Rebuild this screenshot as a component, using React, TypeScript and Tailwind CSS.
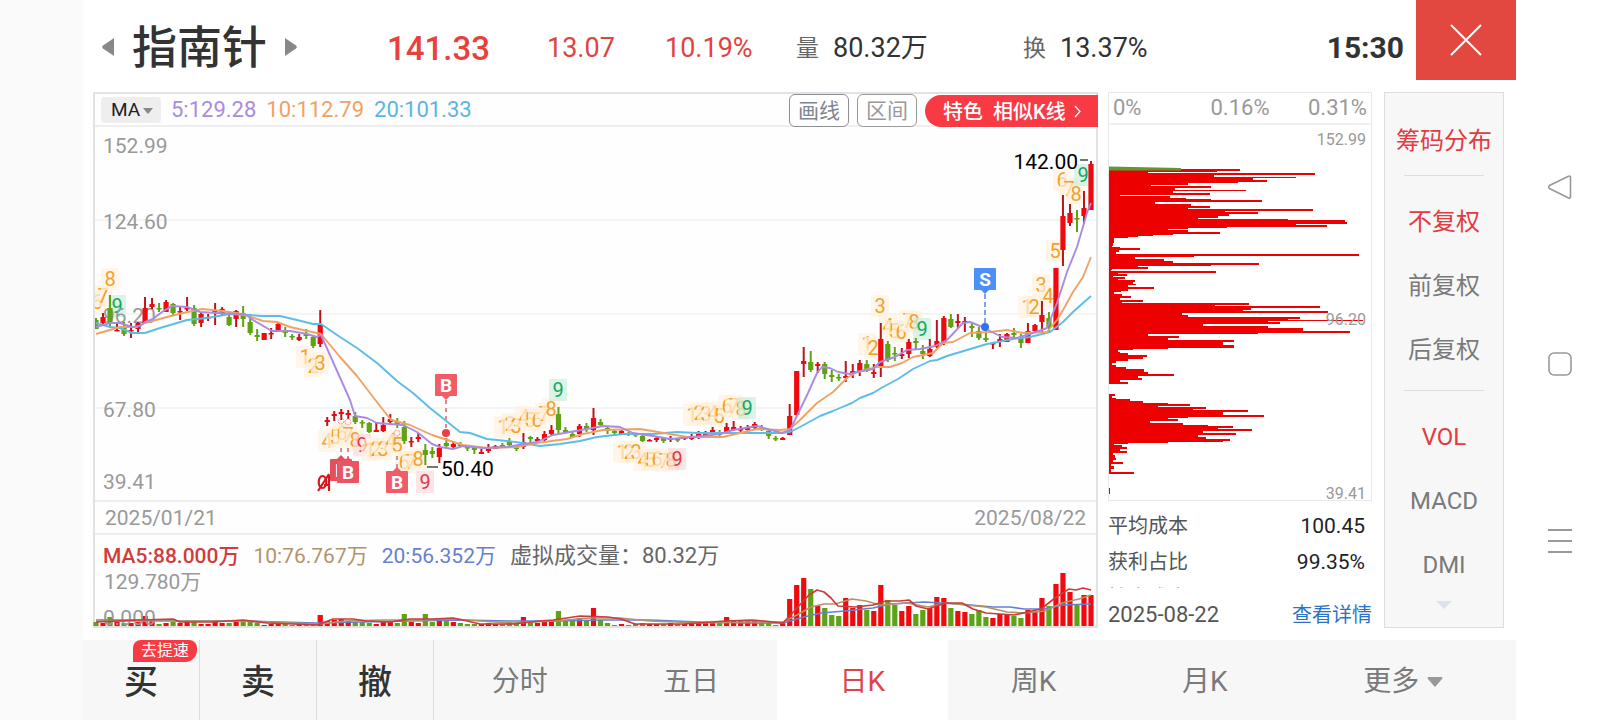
import React, { useState } from 'react';

type Candle = [high: number, top: number, bottom: number, low: number, up: 0 | 1, volume: number];
type TagKind = 'orange' | 'green' | 'red';
type Tag = [x: number, y: number, n: number, kind?: TagKind];

const FIRST_X = 96;
const STEP = 7.007;

const candles: Candle[] = [
  [318, 320, 329, 329, 0, 4], [313, 317, 323, 324, 1, 3], [295, 308, 323, 327, 0, 9], [323, 330, 331, 331, 1, 4],
  [322, 327, 334, 336, 0, 3], [323, 330, 331, 338, 1, 3], [322, 323, 329, 332, 1, 4], [297, 308, 323, 323, 1, 10],
  [298, 304, 307, 309, 1, 6], [303, 308, 309, 312, 0, 2], [300, 302, 312, 312, 1, 3], [303, 304, 313, 315, 0, 4],
  [307, 311, 312, 320, 1, 3], [297, 308, 309, 311, 1, 4], [305, 308, 324, 326, 0, 4], [312, 314, 323, 327, 1, 2],
  [314, 317, 318, 321, 1, 2], [303, 311, 313, 325, 1, 6], [307, 309, 313, 316, 1, 3], [315, 317, 325, 326, 0, 3],
  [310, 311, 319, 327, 1, 6], [306, 314, 319, 327, 0, 5], [314, 322, 333, 335, 0, 4], [329, 335, 337, 341, 0, 3],
  [333, 333, 340, 340, 1, 1], [328, 333, 334, 339, 1, 2], [323, 324, 330, 331, 1, 3], [327, 331, 333, 337, 0, 2],
  [334, 336, 337, 340, 0, 1], [334, 337, 340, 341, 1, 2], [329, 334, 336, 339, 0, 2], [336, 337, 346, 348, 0, 3],
  [310, 324, 344, 347, 1, 11], [417, 420, 422, 426, 1, 5], [411, 414, 416, 421, 1, 6], [409, 412, 414, 420, 1, 7],
  [410, 413, 415, 419, 1, 5], [412, 416, 422, 424, 0, 4], [420, 422, 423, 428, 0, 4], [422, 423, 432, 433, 0, 3],
  [423, 430, 432, 432, 1, 2], [417, 425, 431, 432, 1, 4], [414, 419, 422, 423, 1, 4], [418, 422, 424, 428, 0, 3],
  [421, 427, 441, 444, 0, 12], [437, 441, 442, 447, 1, 4], [433, 437, 439, 442, 1, 3], [444, 450, 455, 465, 0, 12],
  [447, 451, 454, 458, 0, 4], [444, 448, 457, 463, 1, 8], [438, 443, 446, 447, 0, 7], [441, 444, 447, 448, 1, 4],
  [442, 444, 446, 447, 0, 3], [445, 447, 448, 451, 0, 2], [447, 448, 450, 454, 0, 2], [449, 452, 454, 454, 1, 2],
  [444, 448, 451, 453, 1, 3], [445, 446, 449, 449, 1, 2], [443, 445, 447, 448, 0, 2], [438, 441, 445, 447, 0, 4],
  [446, 447, 449, 451, 0, 3], [433, 442, 447, 449, 1, 9], [436, 437, 439, 443, 0, 4], [437, 439, 441, 443, 1, 3],
  [431, 434, 440, 441, 1, 4], [425, 430, 434, 435, 1, 5], [407, 414, 430, 433, 0, 15], [427, 430, 432, 433, 0, 6],
  [432, 434, 437, 438, 0, 5], [424, 426, 434, 437, 1, 8], [423, 426, 429, 432, 0, 6], [408, 418, 430, 435, 1, 18],
  [419, 422, 425, 427, 0, 6], [427, 428, 431, 434, 0, 3], [430, 431, 433, 435, 0, 1], [429, 431, 434, 435, 1, 2],
  [432, 433, 435, 436, 0, 1], [433, 434, 435, 437, 0, 2], [434, 436, 441, 442, 0, 3], [439, 440, 441, 441, 1, 2],
  [437, 438, 440, 442, 1, 2], [437, 438, 441, 443, 0, 2], [436, 438, 440, 442, 1, 3], [438, 439, 440, 442, 0, 2],
  [436, 437, 439, 440, 1, 2], [434, 437, 439, 440, 1, 2], [431, 434, 437, 439, 1, 3], [431, 433, 435, 436, 1, 3],
  [427, 430, 433, 434, 1, 4], [430, 433, 435, 438, 0, 3], [423, 427, 432, 433, 1, 9], [421, 427, 430, 431, 1, 6],
  [426, 429, 430, 432, 1, 5], [425, 427, 430, 431, 1, 5], [422, 424, 428, 430, 1, 5], [425, 428, 430, 431, 0, 3],
  [429, 431, 436, 439, 0, 3], [436, 438, 439, 441, 0, 1], [437, 438, 440, 440, 1, 3], [404, 416, 435, 435, 1, 27],
  [371, 371, 415, 416, 1, 41], [347, 361, 364, 377, 1, 48], [351, 362, 370, 372, 0, 37], [362, 364, 366, 373, 1, 20],
  [362, 364, 374, 379, 0, 18], [370, 375, 377, 382, 0, 11], [374, 377, 378, 381, 0, 10], [361, 376, 378, 382, 1, 28],
  [364, 371, 374, 378, 1, 18], [360, 363, 371, 376, 1, 21], [360, 364, 371, 372, 0, 16], [364, 372, 374, 378, 1, 15],
  [323, 339, 368, 377, 1, 41], [341, 344, 360, 362, 0, 26], [347, 353, 354, 361, 0, 21], [348, 354, 356, 359, 1, 15],
  [339, 342, 354, 358, 1, 20], [338, 341, 343, 349, 0, 12], [345, 351, 354, 359, 0, 16], [339, 349, 356, 357, 1, 18],
  [320, 341, 347, 348, 1, 29], [316, 318, 342, 345, 1, 28], [314, 319, 327, 328, 0, 18], [314, 321, 323, 328, 1, 15],
  [317, 321, 323, 332, 1, 14], [322, 326, 328, 337, 0, 12], [327, 331, 338, 340, 0, 16], [330, 338, 340, 342, 0, 9],
  [342, 343, 344, 349, 1, 8], [334, 339, 341, 347, 1, 12], [333, 334, 342, 342, 1, 11], [328, 333, 335, 338, 0, 10],
  [334, 338, 343, 348, 0, 8], [323, 331, 343, 343, 1, 16], [324, 325, 331, 332, 1, 14], [301, 315, 322, 332, 1, 28],
  [312, 318, 327, 333, 0, 20], [268, 268, 330, 330, 1, 42], [195, 216, 250, 266, 1, 53], [204, 213, 223, 226, 1, 34],
  [210, 218, 219, 232, 0, 22], [191, 208, 216, 224, 1, 31], [161, 164, 210, 210, 1, 31],
];

const ma5 =
  '96,327 110,323 120,323 132,327 140,326 145,322 153,319 162,312 172,306 187,307 200,312 217,313 237,314 245,314 253,320 272,331 290,331 307,334 317,337 321,335 350,400 355,416 367,418 377,423 390,424 403,425 417,432 432,444 440,447 453,449 463,446 483,448 507,447 537,442 553,435 587,429 603,426 620,427 633,433 653,436 670,439 693,437 720,434 733,430 757,426 782,433 790,430 795,420 808,393 817,373 822,367 830,368 838,372 850,374 862,371 873,369 880,362 895,357 907,350 920,349 935,346 947,340 963,323 970,322 980,326 1002,337 1017,338 1033,333 1047,328 1057,303 1067,272 1077,247 1087,213 1091,203';
const ma10 =
  '96,334 110,330 120,327 137,327 145,323 167,317 183,313 202,309 223,311 242,314 263,321 277,322 290,327 303,330 321,334 340,357 357,376 373,397 391,420 410,425 432,435 463,445 487,448 517,447 537,443 567,439 583,434 603,430 640,429 670,434 687,437 723,437 740,433 757,429 780,430 790,429 800,420 817,403 833,392 847,378 857,372 877,367 890,367 902,363 913,357 933,353 943,343 953,342 970,333 990,332 1007,330 1023,333 1047,332 1057,320 1063,310 1073,292 1083,277 1091,257';
const ma20 =
  '96,323 110,327 120,328 132,333 145,333 160,328 187,320 207,318 230,314 247,315 263,316 280,316 297,320 313,324 321,324 340,337 357,348 377,363 397,381 413,393 430,408 450,424 460,432 470,433 487,439 507,441 523,443 540,446 560,444 580,441 597,437 623,434 653,434 677,432 697,433 780,433 790,432 800,427 820,416 833,411 840,408 852,403 860,398 873,393 883,387 898,379 913,369 930,361 937,360 947,356 967,350 987,344 1013,339 1030,337 1050,332 1063,322 1073,312 1083,303 1091,296';

const vol5 =
  '96,622 140,620 173,619 180,622 213,622 243,620 267,623 293,624 317,625 333,619 353,619 367,621 390,622 410,619 433,619 453,618 463,620 480,624 513,624 540,621 553,620 580,616 608,617 621,619 635,624 683,624 725,621 752,620 783,623 797,608 809,595 817,590 824,592 831,598 838,606 855,607 873,605 886,601 900,601 909,600 916,606 928,609 945,603 962,603 973,609 986,613 1014,615 1041,609 1055,598 1069,589 1076,590 1083,588 1091,590';
const vol10 =
  '96,621 140,621 190,621 243,621 290,623 320,624 345,621 380,620 420,620 453,619 480,621 513,623 553,621 590,618 620,618 650,621 700,623 745,622 783,622 797,615 811,607 824,604 835,604 852,599 866,601 880,605 907,603 928,607 945,603 966,605 986,607 1007,612 1024,613 1045,611 1062,603 1079,599 1091,595';
const vol20 =
  '96,620 140,620 180,621 243,621 317,623 360,622 410,621 460,620 510,621 560,621 600,620 650,620 700,622 745,623 783,623 804,617 821,613 845,611 873,608 890,604 924,602 959,604 993,607 1010,607 1024,609 1045,609 1062,605 1091,604';

const tags: Tag[] = [
  [97, 302, 6], [103, 296, 7], [110, 279, 8], [117, 306, 9, 'green'],
  [305, 357, 1], [313, 366, 2], [320, 363, 3],
  [327, 441, 4], [335, 437, 5], [342, 433, 6], [348, 435, 7], [355, 440, 8],
  [362, 445, 9, 'red'], [370, 450, 1], [376, 449, 2], [383, 449, 3], [391, 441, 4],
  [397, 445, 5], [404, 462, 6], [411, 462, 7], [418, 459, 8], [425, 482, 9, 'red'],
  [503, 427, 1], [510, 424, 2], [516, 426, 3], [524, 417, 4], [530, 420, 5],
  [537, 420, 6], [544, 414, 7], [551, 409, 8], [558, 390, 9, 'green'],
  [622, 452, 1], [629, 452, 2], [636, 452, 3], [643, 460, 4], [650, 460, 5],
  [657, 459, 6], [664, 461, 7], [671, 460, 8], [677, 459, 9, 'red'],
  [692, 415, 1], [699, 413, 2], [706, 414, 3], [713, 413, 4], [719, 416, 5],
  [727, 406, 6], [734, 406, 7], [741, 409, 8], [747, 408, 9, 'green'],
  [867, 344, 1], [873, 348, 2], [880, 306, 3], [888, 326, 4], [894, 331, 5],
  [901, 332, 6], [908, 321, 7], [914, 322, 8], [922, 329, 9, 'green'],
  [1027, 307, 1], [1034, 307, 2], [1041, 285, 3], [1048, 296, 4],
  [1055, 251, 5], [1062, 180, 6], [1069, 189, 7], [1076, 194, 8],
  [1083, 175, 9, 'green'],
];

const tagStyles: Record<TagKind, { bg: string; fg: string }> = {
  orange: { bg: '#fff1de', fg: '#f0a12c' },
  green: { bg: '#cdeedd', fg: '#17a765' },
  red: { bg: '#fcd9dc', fg: '#dc3c46' },
};

// [y, bar length] from the highest price down
const chips: [number, number][] = [
  [169, 132], [171, 109], [172, 40], [173, 207], [175, 106], [177, 188], [178, 145], [180, 159], [182, 130], [183, 80],
  [185, 43], [186, 103], [188, 67], [190, 138], [191, 65], [193, 102], [195, 12], [196, 62], [198, 78], [199, 103],
  [200, 154], [202, 47], [204, 83], [206, 102], [208, 80], [209, 205], [211, 117], [212, 150], [214, 121], [216, 110],
  [218, 90], [219, 180], [220, 237], [222, 239], [224, 188], [225, 219], [227, 119], [228, 80], [229, 60], [230, 80],
  [232, 112], [234, 65], [235, 45], [236, 30], [237, 20], [238, 6], [243, 5], [246, 4], [247, 12], [248, 32],
  [250, 11], [252, 8], [254, 251], [256, 86], [257, 27], [259, 56], [261, 65], [263, 151], [265, 103], [266, 30],
  [267, 40], [269, 4], [270, 3], [271, 108], [273, 10], [274, 19], [276, 5], [277, 17], [279, 10], [280, 27],
  [282, 25], [284, 28], [285, 20], [287, 46], [289, 20], [291, 13], [292, 6], [294, 14], [296, 23], [298, 12],
  [300, 35], [302, 14], [303, 141], [305, 107], [306, 212], [308, 143], [310, 135], [311, 220], [313, 74], [315, 80],
  [317, 192], [319, 180], [320, 255], [321, 160], [322, 172], [324, 95], [326, 160], [328, 195], [331, 242], [333, 150],
  [334, 40], [336, 71], [338, 60], [340, 126], [342, 115], [345, 126], [348, 60], [349, 25], [350, 10], [352, 12],
  [353, 20], [355, 39], [357, 35], [359, 20], [361, 8], [363, 4], [365, 8], [367, 18], [369, 36], [372, 40],
  [374, 66], [376, 30], [378, 34], [380, 12], [382, 20], [384, 0], [389, 1], [394, 7], [396, 4], [398, 8],
  [399, 22], [401, 35], [403, 60], [404, 82], [406, 50], [407, 98], [409, 85], [410, 140], [412, 115], [415, 156],
  [417, 80], [418, 60], [419, 70], [421, 42], [423, 75], [425, 100], [426, 125], [428, 110], [429, 144], [431, 95],
  [433, 128], [435, 90], [437, 98], [439, 122], [441, 115], [442, 60], [443, 20], [444, 6], [445, 14], [447, 19],
  [449, 12], [451, 19], [453, 5], [455, 7], [458, 8], [460, 5], [462, 15], [464, 3], [466, 6], [469, 3],
  [472, 26], [474, 0],
];

const indicators = ['VOL', 'MACD', 'DMI'];
const adjustments = ['不复权', '前复权', '后复权'];
const periods = ['分时', '五日', '日K', '周K', '月K'];

const NumberTag: React.FC<{ tag: Tag }> = ({ tag: [x, y, n, kind = 'orange'] }) => {
  const { bg, fg } = tagStyles[kind];
  return (
    <g>
      <rect x={x - 9} y={y - 11} width="18" height="22" rx="1" fill={bg} fillOpacity="0.7" />
      <text x={x} y={y + 7} textAnchor="middle" fontSize="20" fill={fg}>{n}</text>
    </g>
  );
};

const Pin: React.FC<{ x: number; y: number; label: string; color: string; up?: boolean }> = ({ x, y, label, color, up }) => (
  <g>
    <rect x={x - 11} y={y - 11} width="22" height="22" rx="1" fill={color} />
    <path d={up ? `M${x - 4} ${y - 11}l4 -4l4 4z` : `M${x - 4} ${y + 11}l4 4l4 -4z`} fill={color} />
    <text x={x} y={y + 7} textAnchor="middle" fontSize="19" fontWeight="700" fill="#fff">{label}</text>
  </g>
);

const CandleChart: React.FC = () => (
  <svg viewBox="95 127 1001 373" className="w-full" role="img" aria-label="日K线图">
    {[220, 314, 408].map(y => (
      <line key={y} x1="95" x2="1096" y1={y} y2={y} stroke="#f0f0f0" strokeWidth="1.5" />
    ))}
    {tags.map((tag, i) => <NumberTag key={i} tag={tag} />)}
    <g fontSize="21" fill="#999">
      <text x="103" y="153">152.99</text>
      <text x="103" y="229">124.60</text>
      <text x="103" y="323">96.20</text>
      <text x="103" y="417">67.80</text>
      <text x="103" y="489">39.41</text>
    </g>
    {candles.map(([high, top, bottom, low, up], i) => {
      const x = FIRST_X + STEP * i;
      const color = up ? '#f00a0f' : '#5ea314';
      return (
        <g key={i}>
          <line x1={x} x2={x} y1={high} y2={low} stroke={up ? '#b8161c' : color} strokeWidth="2" />
          <rect x={x - 2.6} y={top} width="5.2" height={Math.max(bottom - top, 1.5)} fill={color} />
        </g>
      );
    })}
    <g fill="none" strokeWidth="1.9" strokeLinejoin="round">
      <polyline points={ma20} stroke="#5bbde8" />
      <polyline points={ma10} stroke="#f0a265" />
      <polyline points={ma5} stroke="#a98be0" />
    </g>

    <g stroke="#dd8a94" strokeWidth="2" strokeDasharray="4 4">
      <line x1="446" x2="446" y1="400" y2="428" />
      <line x1="341" x2="341" y1="448" y2="458" />
      <line x1="348" x2="348" y1="448" y2="458" />
      <line x1="397" x2="397" y1="456" y2="470" />
    </g>
    <line x1="985" x2="985" y1="294" y2="324" stroke="#7aa6ef" strokeWidth="2" strokeDasharray="5 3" />
    <circle cx="446" cy="433" r="4" fill="#ea3e4c" />
    <circle cx="985" cy="327" r="4" fill="#2f74e8" />
    <g fill="none" stroke="#e9929a" strokeDasharray="2 1">
      <circle cx="341" cy="421" r="3" />
      <circle cx="348" cy="422" r="3" />
      <circle cx="397" cy="433" r="3" />
    </g>
    <Pin x={446} y={385} label="B" color="#f25c69" />
    <Pin x={341} y={470} label="B" color="#e2505c" up />
    <Pin x={348} y={472} label="B" color="#ea5561" up />
    <Pin x={397} y={482} label="B" color="#f25c69" up />
    <Pin x={985} y={279} label="S" color="#4d8ff8" />

    <g fill="none" stroke="#d5191f" strokeWidth="2.2">
      <ellipse cx="322.5" cy="482" rx="3.8" ry="6" />
      <path d="M318 491L329 474M329 475v16M324 485h6" />
    </g>

    <g stroke="#777" strokeWidth="2">
      <line x1="1080" x2="1088" y1="160" y2="160" />
      <line x1="427" x2="438" y1="467" y2="467" />
    </g>
    <g fontSize="21" fill="#000">
      <text x="1078" y="169" textAnchor="end">142.00</text>
      <text x="441" y="476">50.40</text>
    </g>
  </svg>
);

const VolumeChart: React.FC = () => (
  <svg viewBox="95 571 1001 55" className="w-full overflow-visible" role="img" aria-label="成交量">
    {candles.map((candle, i) => (
      <rect
        key={i}
        x={FIRST_X + STEP * i - 2.6}
        y={626 - candle[5]}
        width="5.2"
        height={candle[5]}
        fill={candle[4] ? '#f00a0f' : '#5ea314'}
      />
    ))}
    <g fontSize="21" fill="#999">
      <text x="104" y="589">129.780万</text>
      <text x="103" y="625">0.000</text>
    </g>
    <g fill="none" strokeWidth="1.7" strokeLinejoin="round">
      <polyline points={vol20} stroke="#6680cf" />
      <polyline points={vol10} stroke="#b29468" />
      <polyline points={vol5} stroke="#cc3b3b" />
    </g>
  </svg>
);

const ChipChart: React.FC = () => (
  <svg viewBox="1109 125 262 375" className="w-full" role="img" aria-label="筹码分布图">
    {chips.slice(0, -1).map(([y, w], i) => (
      <rect key={y} x="1108" y={y} width={w} height={chips[i + 1][0] - y} fill="#ec0000" />
    ))}
    <path d="M1108 166.5L1181 168v2.500H1108z" fill="#5b9a32" />
    <rect x="1108" y="488" width="2" height="6" fill="#ec0000" />
    <g fontSize="16" fill="#999" textAnchor="end">
      <text x="1366" y="145">152.99</text>
      <text x="1366" y="325">96.20</text>
      <text x="1366" y="499">39.41</text>
    </g>
  </svg>
);

const Header: React.FC = () => (
  <header className="flex h-[92px] items-center text-[27px] leading-none text-[#333]">
    <div className="flex w-[304px] items-center gap-[18px] pl-[19px] pt-0.5">
      <button aria-label="上一只">
        <svg width="12" height="18" viewBox="0 0 12 18"><path d="M12 0v18L1 10.500Q-.5 9 1 7.500z" fill="#888" /></svg>
      </button>
      <h1 className="pt-0.5 text-[45px] font-medium">指南针</h1>
      <button aria-label="下一只">
        <svg width="12" height="18" viewBox="0 0 12 18"><path d="M0 0v18L11 10.500Q12.500 9 11 7.500z" fill="#888" /></svg>
      </button>
    </div>
    <span className="w-[160px] pt-1 text-[33px] font-medium text-[#e8413d]">141.33</span>
    <span className="w-[118px] pt-1 text-[#e04440]">13.07</span>
    <span className="w-[131px] pt-1 text-[#e04440]">10.19%</span>
    <div className="flex w-[227px] items-center gap-[14px] pt-1">
      <span className="text-[23px] text-[#666]">量</span>
      <span>80.32万</span>
    </div>
    <div className="flex flex-1 items-center gap-[14px] pt-1">
      <span className="text-[23px] text-[#666]">换</span>
      <span>13.37%</span>
    </div>
    <time className="mr-3 pt-1 text-[30px] font-bold">15:30</time>
    <button aria-label="关闭" className="flex h-20 w-[100px] items-center justify-center self-start bg-[#e2483f]">
      <svg width="32" height="32" viewBox="0 0 32 32" stroke="#fff" strokeWidth="2">
        <path d="M1 1L31 31M31 1L1 31" />
      </svg>
    </button>
  </header>
);

const ChartPanel: React.FC = () => (
  <section className="min-w-0 flex-1 border-2 border-[#e2e2e2] bg-[#fefefe]">
    <div className="flex h-[33px] items-center border-b-2 border-[#eee] text-[22px] leading-none">
      <div className="relative ml-1.5 mr-2.5">
        <select aria-label="主图指标" className="block h-[26px] w-[60px] appearance-none rounded-sm bg-[#eee] pl-2.5 text-[19px] leading-none text-[#222]">
          <option>MA</option>
          <option>BOLL</option>
        </select>
        <svg width="10" height="6" viewBox="0 0 10 6" className="pointer-events-none absolute right-2 top-[11px]">
          <path d="M0 0h10L6 5q-1 1-2 0z" fill="#888" />
        </svg>
      </div>
      <div className="flex flex-1 gap-2.5">
        <span className="text-[#a98be0]">5:129.28</span>
        <span className="text-[#f0a265]">10:112.79</span>
        <span className="text-[#5bb5e4]">20:101.33</span>
      </div>
      <div className="-mr-0.5 flex items-center gap-2 text-[21px]">
        <button className="mt-0.5 h-[33px] w-[60px] rounded-md border border-[#8b8f96] bg-white pt-0.5 text-[#7f858f]">画线</button>
        <button className="mt-0.5 h-[33px] w-[60px] rounded-md border border-[#999] bg-white pt-0.5 text-[#999]">区间</button>
        <button className="mt-0.5 flex h-8 w-[173px] items-center rounded-l-full bg-[#f83a45] pl-[18px] pt-0.5 text-[20px] font-medium text-white">
          特色
          <span className="ml-2.5">相似K线</span>
          <svg width="7" height="13" viewBox="0 0 7 13" className="ml-2" fill="none" stroke="#fff" strokeWidth="1.3">
            <path d="M1 1l5 5.500l-5 5.500" />
          </svg>
        </button>
      </div>
    </div>
    <CandleChart />
    <div className="flex h-[35px] items-center justify-between border-b-2 border-t-2 border-[#eee] pl-2.5 pr-2.5 pt-0.5 text-[21px] leading-none text-[#999]">
      <time>2025/01/21</time>
      <time>2025/08/22</time>
    </div>
    <div className="flex h-9 items-center gap-[14px] whitespace-nowrap pl-2 pt-1.5 text-[21px] leading-none">
      <span className="font-medium text-[#cf3d3d]">MA5:88.000万</span>
      <span className="text-[#b29468]">10:76.767万</span>
      <span className="text-[#6680cf]">20:56.352万</span>
      <span className="text-[22px] text-[#666]">虚拟成交量：80.32万</span>
    </div>
    <VolumeChart />
  </section>
);

const ChipPanel: React.FC = () => (
  <section className="ml-2.5 flex w-[264px] flex-col text-[21px] leading-none">
    <div className="border border-[#e8e8e8]">
      <div className="grid h-8 grid-cols-3 items-center border-b-2 border-[#f0f0f0] px-1 text-[22px] text-[#999]">
        <span>0%</span>
        <span className="text-center">0.16%</span>
        <span className="text-right">0.31%</span>
      </div>
      <ChipChart />
    </div>
    <dl className="mt-[7px] h-20 overflow-hidden">
      <div className="flex h-9 items-center justify-between pr-[7px]">
        <dt className="text-[20px] text-[#555]">平均成本</dt>
        <dd className="text-[#222]">100.45</dd>
      </div>
      <div className="flex h-9 items-center justify-between pr-[7px]">
        <dt className="text-[20px] text-[#555]">获利占比</dt>
        <dd className="text-[#222]">99.35%</dd>
      </div>
      <div className="flex h-9 items-center">
        <dt className="text-[20px] text-[#555]">持仓成本区间</dt>
      </div>
    </dl>
    <div className="flex flex-1 items-center justify-between pt-3.5">
      <time className="text-[22px] text-[#555]">2025-08-22</time>
      <a href="#detail" className="text-[20px] text-[#2b73c4]">查看详情</a>
    </div>
  </section>
);

const SideMenu: React.FC = () => {
  const [adjust, setAdjust] = useState('不复权');
  const [indicator, setIndicator] = useState('VOL');

  return (
    <aside className="ml-3 flex w-[120px] flex-col items-center border border-[#ddd] bg-[#f7f7f7] pt-5 text-[24px] leading-none text-[#7a7a7a]">
      <button className="h-14 text-[#e23b40]">筹码分布</button>
      <hr className="mb-3.5 mt-1.5 w-20 border-[#ddd]" />
      {adjustments.map(name => (
        <button key={name} onClick={() => setAdjust(name)} className={name === adjust ? 'h-16 text-[#e23b40]' : 'h-16'}>
          {name}
        </button>
      ))}
      <hr className="mb-3.5 mt-2 w-20 border-[#ddd]" />
      {indicators.map(name => (
        <button key={name} onClick={() => setIndicator(name)} className={name === indicator ? 'h-16 text-[#e23b40]' : 'h-16'}>
          {name}
        </button>
      ))}
      <svg width="16" height="8" viewBox="0 0 16 8" className="mt-1">
        <path d="M0 0h16L8 8z" fill="#dbe2ea" />
      </svg>
    </aside>
  );
};

const BottomBar: React.FC = () => {
  const [period, setPeriod] = useState('日K');

  return (
    <footer className="mt-3 flex h-20 bg-[#f7f7f7] text-[28px] leading-none text-[#7a7a7a]">
      {['买', '卖', '撤'].map(name => (
        <button key={name} className="relative w-[117px] border-r border-[#ddd] pt-1 text-[34px] font-medium text-[#333]">
          {name}
          {name === '买' && (
            <span className="absolute right-0.5 top-0 flex h-[22px] w-16 items-center justify-center rounded-t-lg rounded-br-xl bg-[#f83a45] text-[16px] font-normal text-white">
              去提速
            </span>
          )}
        </button>
      ))}
      {periods.map(name => (
        <button
          key={name}
          onClick={() => setPeriod(name)}
          className={name === period ? 'flex-[19] bg-white pt-1 text-[#e0424a]' : 'flex-[19] pt-1'}
        >
          {name}
        </button>
      ))}
      <button className="flex flex-[25] items-center justify-center gap-2 pt-1">
        更多
        <svg width="16" height="10" viewBox="0 0 16 10"><path d="M1 0h14q1 0 0 2L9 9q-1 1-2 0L1 2q-1-2 0-2z" fill="#999" /></svg>
      </button>
    </footer>
  );
};

export default function App() {
  return (
    <div className="flex min-h-screen bg-white font-['Roboto','Noto_Sans_CJK_SC',sans-serif]">
      <div className="w-[83px] shrink-0 bg-[#fafafa]" />
      <main className="min-w-0 flex-1">
        <Header />
        <div className="flex pl-2.5 pr-3">
          <ChartPanel />
          <ChipPanel />
          <SideMenu />
        </div>
        <BottomBar />
      </main>
      <nav className="flex w-[88px] shrink-0 flex-col items-center gap-[153px] pt-[175px]">
        <button aria-label="返回">
          <svg width="24" height="24" viewBox="0 0 24 24" fill="none" stroke="#999" strokeWidth="1.6">
            <path d="M1.500 10.500Q0 12 1.500 13.500L20.500 23Q22.500 23.500 22.500 21.500V2.500Q22.500 .5 20.500 1.200Z" />
          </svg>
        </button>
        <button aria-label="主屏幕">
          <svg width="24" height="24" viewBox="0 0 24 24" fill="none" stroke="#999" strokeWidth="1.6">
            <rect x="1" y="1" width="22" height="22" rx="5" />
          </svg>
        </button>
        <button aria-label="最近任务">
          <svg width="24" height="24" viewBox="0 0 24 24" stroke="#999" strokeWidth="1.8">
            <path d="M0 1h24M0 12h24M0 23h24" />
          </svg>
        </button>
      </nav>
    </div>
  );
}
